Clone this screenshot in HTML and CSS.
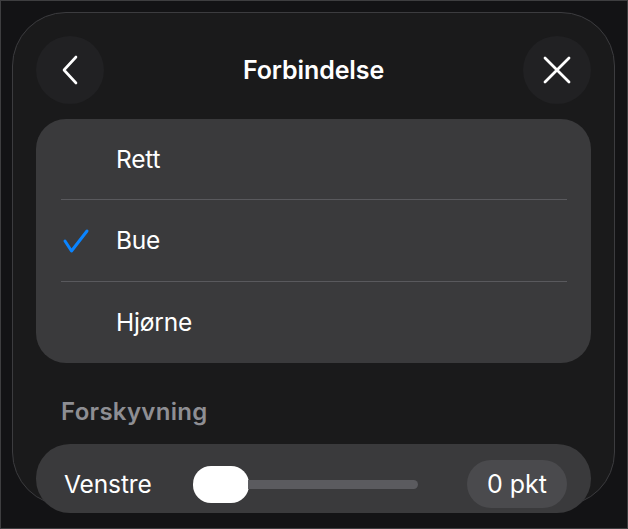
FILE: index.html
```html
<!DOCTYPE html>
<html lang="nb">
<head>
    <meta charset="UTF-8">
    <meta name="viewport" content="width=device-width, initial-scale=1.0">
    <title>Forbindelse</title>
    <link rel="stylesheet" href="styles.css">
</head>
<body>
    <div class="screen">
        <div class="panel">
            <!-- Top bar with back and close buttons -->
            <div class="topbar">
                <span class="roundBtn">
                    <svg width="20" height="30" viewBox="0 0 20 30">
                        <path d="M16 2 L4 15 L16 28" fill="none" stroke="#fff" stroke-width="2.6" stroke-linecap="round" stroke-linejoin="round"/>
                    </svg>
                </span>
                <h2 class="title">Forbindelse</h2>
                <span class="roundBtn">
                    <svg width="30" height="30" viewBox="0 0 30 30">
                        <path d="M3 3 L27 27 M27 3 L3 27" fill="none" stroke="#fff" stroke-width="2.8" stroke-linecap="round"/>
                    </svg>
                </span>
            </div>

            <!-- Connection type options -->
            <ul class="options">
                <li class="first">Rett</li>
                <li class="checked">
                    <svg class="tick" width="28" height="26" viewBox="0 0 28 26">
                        <path d="M3 13 L9.5 23 L25 3" fill="none" stroke="#0a84ff" stroke-width="3" stroke-linecap="round" stroke-linejoin="round"/>
                    </svg>
                    Bue
                </li>
                <li>Hjørne</li>
            </ul>

            <div class="sectionLabel">Forskyvning</div>

            <div class="sliderRow">
                <span class="sliderLabel">Venstre</span>
                <div class="slider">
                    <span class="thumb"></span>
                    <span class="track"></span>
                </div>
                <span class="valuePill">0 pkt</span>
            </div>
        </div>
    </div>
</body>
</html>
```

FILE: styles.css
```css
* {
    box-sizing: border-box;
}

body, html {
    margin: 0;
    padding: 0;
    background-color: #131315;
    font-family: 'Inter', 'Noto Sans', sans-serif;
    color: #fff;
}

/* Outer frame of the screenshot */
.screen {
    width: 628px;
    height: 529px;
    border: 1px solid #3e3e40;
    padding: 11px 12px 0 11px;
    overflow: hidden;
}

/* The rounded sheet */
.panel {
    width: 603px;
    height: 494px;
    background: #1a1a1b;
    border: 1px solid #3c3c3f;
    border-radius: 54px;
    padding: 23px 23px 0 23px;
}

.topbar {
    display: flex;
    align-items: center;
    justify-content: space-between;
    height: 68px;
}

.roundBtn {
    width: 68px;
    height: 68px;
    border-radius: 50%;
    background: #212123;
    display: flex;
    align-items: center;
    justify-content: center;
}

.title {
    margin: 0;
    font-size: 25px;
    font-weight: 600;
    letter-spacing: -0.1px;
}

/* Options list */
.options {
    list-style: none;
    margin: 15px 0 0 0;
    padding: 0;
    background: #3a3a3c;
    border-radius: 30px;
}

.options li {
    position: relative;
    height: 82px;
    padding-left: 80px;
    display: flex;
    align-items: center;
    font-size: 24.5px;
    letter-spacing: -0.2px;
}

.options li.first {
    height: 80px;
}

/* Separator lines between rows */
.options li + li::before {
    content: '';
    position: absolute;
    top: 0;
    left: 25px;
    right: 24px;
    height: 1px;
    background: #59595d;
}

.tick {
    position: absolute;
    left: 26px;
    top: 29px;
}

.sectionLabel {
    padding: 35px 0 18px 25px;
    height: 81px;
    line-height: 28px;
    font-size: 24px;
    font-weight: 600;
    color: #8e8e93;
    letter-spacing: 0.3px;
}

/* Slider card */
.sliderRow {
    display: flex;
    align-items: center;
    height: 69px;
    padding: 16px 24px 5px 28px;
    background: #3a3a3c;
    border-radius: 34px;
}

.sliderLabel {
    font-size: 24.5px;
    width: 129px;
    letter-spacing: -0.1px;
}

.slider {
    display: flex;
    align-items: center;
    width: 225px;
    margin-top: 1px;
}

.thumb {
    width: 56px;
    height: 37px;
    border-radius: 18px;
    background: #fff;
}

.track {
    flex: 1;
    height: 9px;
    margin-left: -1px;
    border-radius: 0 5px 5px 0;
    background: #5b5b5f;
}

.valuePill {
    margin-left: auto;
    width: 100px;
    height: 48px;
    border-radius: 24px;
    background: #4a4a4d;
    display: flex;
    align-items: center;
    justify-content: center;
    font-size: 25px;
}
```
